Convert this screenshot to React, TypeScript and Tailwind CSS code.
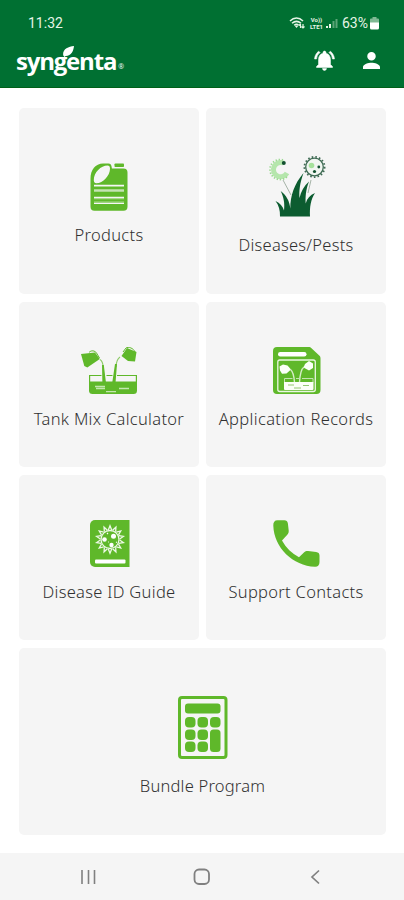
import React from 'react';
import clsx from 'clsx';

const GREEN = '#5fb82a';
const PALE = '#f5f5f5';

const spokes = (count: number) => Array.from({ length: count }, (_, i) => (i * 360) / count);

const JugIcon = () => (
  <svg width="38" height="48" viewBox="0 0 38 48">
    <path
      fill={GREEN}
      fillRule="evenodd"
      d="M13 .5h5.5c1.8 0 2.8 1.2 3 2.8l.4 2.3h11.6a4 4 0 0 1 4 4v34.2a4 4 0 0 1-4 4h-29a4 4 0 0 1-4-4V15.500C.5 7 5.500 .5 13 .5Zm4.500 2C11 2.500 3.800 9.500 3.800 17c0 2.200 1 3.200 2.600 3.200 6.600 0 13.600-7.700 13.600-14.500 0-2.100-.8-3.200-2.500-3.200Z"
    />
    <rect x="24.500" y=".5" width="9.500" height="3.500" rx=".8" fill={GREEN} />
    <path stroke={PALE} strokeWidth="1.300" d="M4 22.300h30M4 27.800h30M4 34.500h30M4 40.300h30" />
    <path stroke="#a9d98d" strokeWidth="1.200" d="M4 23.500h30M4 35.700h30M4 26.600h30M4 39.100h30" />
  </svg>
);

const DiseasesIcon = () => (
  <svg className="ml-0.5" width="60" height="61" viewBox="0 0 60 61">
    <path d="m16 24 8 15M44 24l-3 13" stroke="#a5b3a7" strokeWidth="1" fill="none" />
    <path d="M16.500 7A7.200 7.200 0 1 0 20 17" stroke="#b5e6ac" strokeWidth="5" fill="none" />
    <path
      d="M16 4A10 10 0 1 0 21 19.500"
      stroke="#9bd991"
      strokeWidth="1.800"
      strokeDasharray="1.300 1.800"
      fill="none"
    />
    <circle cx="16.800" cy="7" r="2" fill="#12502f" />
    <circle cx="47.500" cy="11" r="8.800" fill="#f1f6f1" stroke="#3f6b54" strokeWidth="1.300" />
    <circle
      cx="47.500"
      cy="11"
      r="10.100"
      fill="none"
      stroke="#3f6b54"
      strokeWidth="1.800"
      strokeDasharray="1.600 2.100"
    />
    <circle cx="44.500" cy="9.500" r="2.800" fill="#a5e29b" />
    <circle cx="51.800" cy="11" r="1.400" fill="#12502f" />
    <circle cx="47.500" cy="15.500" r="1.600" fill="#12502f" />
    <path
      fill="#0c5c30"
      d="M13 60.500c.2-6-1.300-11.500-4.500-15.500 4.500 2 7.300 5.200 8.500 9.500 1-7.500-.5-13.500-3.300-19.500 5.800 4.500 8.800 10 9.600 17.500 0-13 4-24.500 13.200-35.500-3.700 10-4.500 18-4 25 1.500-6.500 4.500-12 9.500-16.500-3.300 8.500-3.700 15.500-3.300 22 1.300-5 4.300-8.300 9.300-10.500-4.200 6.500-5.500 14-5 23.500Z"
    />
  </svg>
);

// Two measuring cups pouring into an open tank
const TankIcon = () => (
  <svg width="57" height="47" viewBox="0 0 57 47">
    <g fill="none" stroke={GREEN}>
      <path d="M8 5.500c2-2.500 6-2 7.500.5l3 5M42 5l3-4c2.500-1.500 7.500 0 9 4" strokeWidth="1" />
      <path d="M19 12.500c2.500 1.500 3 4 3.300 8M39 10c-3 2-3.800 5-4 10" strokeWidth="1.100" opacity=".7" />
      <path d="M20.500 28.500H8.600v8M25.500 28.500h6M36 28.500h19.400v8" strokeWidth="1.200" />
    </g>
    <g fill={GREEN}>
      <path d="m0 7 14-1.500 4.800 6.500-12.500 8.500-3-1.500Z" />
      <path d="m46 1 9.500 4-1.500 9.500-7-.5-6.500-5Z" />
      <path d="M21 18h1.800l2.200 18h-3.600ZM34 17h2l-1.500 19H31.200Z" />
      <path d="M8 34.500h48v9a3.500 3.500 0 0 1-3.500 3.500h-41A3.500 3.500 0 0 1 8 43.500Z" />
    </g>
    <path stroke="#c4e6b0" strokeWidth="1.300" d="M14 39.500h10M15 41.500h9M38 41.500h10M25 44.700h10" />
  </svg>
);

const RecordsIcon = () => (
  <svg className="ml-px" width="48" height="47" viewBox="0 0 48 47">
    <path
      fill={GREEN}
      d="M4 0h31.500c1.500 0 2.200.5 3 1.300l8 7.500c.8.800 1 1.600 1 2.700V43a4 4 0 0 1-4 4H4a4 4 0 0 1-4-4V4a4 4 0 0 1 4-4Z"
    />
    <rect x="5" y="5" width="28.500" height="4.500" rx="2.200" fill="#fff" />
    <rect x="4.800" y="13" width="37.500" height="31.500" rx="2" fill="none" stroke="#e9f7e1" strokeWidth="1.300" />
    <path fill="#fbfff8" d="m6.500 19.500 3.500-2 4.500 1 3.500 4-4.500 4-4.500.3-2-3.300ZM32 17l4-3 4 2.500v4.500l-4 2.500-5.500-3Z" />
    <path d="M17.500 22.500c2.500 2 3.500 6 4 13M31 20c-3 2-4 7-4.500 15.500" stroke="#d6edc8" strokeWidth="1.400" fill="none" />
    <path d="M19.500 31.500h-8v4M23 31.500h3M29 31.500h11v4" stroke="#c3e3b0" strokeWidth="1" fill="none" />
    <path fill="#fbfff8" d="M11 35h29.500v7a1 1 0 0 1-1 1H12a1 1 0 0 1-1-1Z" />
    <path stroke="#93c873" strokeWidth="1" d="M15 38h6M30 38.500h6M21 41h7" />
  </svg>
);

const GuideIcon = () => (
  <svg className="ml-0.5" width="40" height="47" viewBox="0 0 40 47">
    <path fill={GREEN} d="M5 0h34.500v47H5a5 5 0 0 1-5-5V5a5 5 0 0 1 5-5Z" />
    <rect x="5" y="39.500" width="30.500" height="4" rx="1" fill="#fff" />
    {spokes(14).map((angle) => (
      <path
        key={angle}
        d="m18.300 10 1.700-4.200 1.700 4.200"
        stroke="#edf8e6"
        strokeWidth="1.300"
        fill="none"
        transform={`rotate(${angle} 20 19.500)`}
      />
    ))}
    <circle cx="20" cy="19.500" r="9" fill="none" stroke="#edf8e6" strokeWidth="1.300" />
    <circle cx="14.500" cy="19.500" r="2.300" fill="#fff" />
    <circle cx="23.500" cy="16.300" r="2.500" fill="#fff" />
    <circle cx="21.500" cy="25" r="2.200" fill="#fff" />
    <path d="m17 14 1-1M26 22l1 .5M18 22h.8" stroke="#fff" strokeWidth="1.200" />
  </svg>
);

const PhoneIcon = () => (
  <svg width="47" height="47" viewBox="0 0 47 47">
    <path
      fill={GREEN}
      d="M4.500.3h6.800c2.100 0 3.200 1 3.600 3.100l.8 7.100c.1 1.600-.2 2.800-1.200 4L9 20.500c4 7.300 9.800 13 17 16.800l5.200-5c1.100-1 2.200-1.300 3.900-1.200l8 .9c2.300.3 3.400 1.500 3.400 3.600v6.400c0 3.200-1.600 4.900-4.500 4.800C20 45.800 1 28 .3 5.500.2 2.300 1.600.3 4.500.3Z"
    />
  </svg>
);

const CalculatorIcon = () => (
  <svg width="50" height="63" viewBox="0 0 50 63">
    <rect x="1.500" y="1.500" width="46.500" height="60" rx="2.500" fill="none" stroke={GREEN} strokeWidth="3" />
    <g fill={GREEN}>
      <rect x="7" y="7.500" width="35.500" height="10" rx="3" />
      <rect x="7" y="21" width="10.500" height="10.500" rx="4" />
      <rect x="19.500" y="21" width="10.500" height="10.500" rx="4" />
      <rect x="32" y="21" width="10.500" height="10.500" rx="4" />
      <rect x="7" y="33.500" width="10.500" height="10.500" rx="4" />
      <rect x="19.500" y="33.500" width="10.500" height="10.500" rx="4" />
      <rect x="7" y="45.500" width="10.500" height="10.500" rx="4" />
      <rect x="19.500" y="45.500" width="10.500" height="10.500" rx="4" />
      <rect x="32" y="33.500" width="10.500" height="22.500" rx="3.500" />
    </g>
  </svg>
);

interface MenuCardProps {
  icon: React.ReactNode;
  label: string;
  className?: string;
  labelClassName?: string;
}

const MenuCard: React.FC<MenuCardProps> = ({ icon, label, className, labelClassName }) => (
  <button className={clsx('flex flex-col items-center rounded-[5px] bg-[#f5f5f5]', className)}>
    {icon}
    <span className={clsx('whitespace-nowrap text-[16.5px] leading-6 font-light text-[#303030]', labelClassName)}>
      {label}
    </span>
  </button>
);

const StatusBar = () => (
  <div className="flex h-[46px] items-center justify-between pl-7 pr-[25px] text-[#e6f5e6]">
    <span className="font-['Roboto',sans-serif] text-[14px] leading-4 font-normal">11:32</span>
    <div className="flex items-center">
      <svg width="16" height="14" viewBox="0 0 16 14" fill="none">
        <path d="M1 5c4-4 9-4 13 0M3 7.300c3-2.600 6-2.600 9 0M5.200 9.300c1.500-1.300 3-1.300 4.500 0" stroke="currentColor" strokeWidth="1.500" />
        <path d="m5.500 9.500 2 2.500 2-2.500Z" fill="currentColor" />
        <path d="M11.500 12V8m-1.500 1.500L11.500 8M14 8v4m-1.500-1.500L14 12l1.500-1.500" stroke="currentColor" strokeWidth="1.200" />
      </svg>
      <span className="ml-1 flex w-[15px] flex-col items-center font-['Roboto',sans-serif] text-[6px] leading-[7px] font-bold">
        <span>Vo))</span>
        <span>LTE1</span>
      </span>
      <svg className="ml-0.5" width="13" height="14" viewBox="0 0 13 14">
        <path d="M0 10h2v2H0ZM3 8h2v4H3Z" fill="currentColor" />
        <path d="M6.500 5h2v7h-2ZM9.500 3h2v9h-2Z" fill="#5ba477" />
      </svg>
      <span className="ml-[3px] font-['Roboto',sans-serif] text-[14px] leading-4 font-normal">63%</span>
      <svg className="ml-0.5" width="9" height="13" viewBox="0 0 9 13">
        <path d="M2.500 0h4v1.500H8q1 0 1 1V6H0V2.500q0-1 1-1h1.500Z" fill="#80b994" />
        <path d="M0 5.500h9V11q0 1.500-1.500 1.500h-6Q0 12.500 0 11Z" fill="#fff" />
      </svg>
    </div>
  </div>
);

const AppBar = () => (
  <div className="flex h-[42px] items-start justify-between pl-4 pr-[24px] text-white">
    <div className="relative flex items-start font-['Open_Sans',sans-serif]">
      <span className="text-[24px] leading-[30px] font-bold tracking-[-1.2px]">syngenta</span>
      <span className="mt-[15px] ml-[2px] text-[7px] leading-3">®</span>
      <svg className="absolute top-0 left-[47px]" width="11" height="12" viewBox="0 0 11 12">
        <path d="M11 0C5 .5-1 3.500.3 9.500L1.500 11l1.200-1C8.500 9.500 10.500 5 11 0Z" fill="#fff" />
      </svg>
    </div>
    <div className="flex items-start gap-7">
      <svg className="mt-1" width="21" height="21" viewBox="1.500 1.500 21 21" fill="currentColor">
        <path d="M7.580 4.080 6.150 2.650C3.750 4.480 2.170 7.300 2.030 10.500h2a8.445 8.445 0 0 1 3.550-6.420zm12.390 6.420h2c-.15-3.200-1.730-6.020-4.120-7.850l-1.420 1.430a8.495 8.495 0 0 1 3.540 6.420zM18 11c0-3.070-1.640-5.640-4.500-6.320V4c0-.83-.67-1.500-1.500-1.500s-1.500.67-1.500 1.500v.68C7.630 5.360 6 7.920 6 11v5l-2 2v1h16v-1l-2-2v-5zm-6 11c.14 0 .27-.01.400-.04.650-.14 1.180-.58 1.440-1.180.1-.240.150-.500.150-.780h-4c.010 1.100.900 2 2.010 2z" stroke="currentColor" strokeWidth=".5" />
      </svg>
      <svg className="mt-1.5" width="17" height="17" viewBox="4 4 16 16" fill="currentColor">
        <path d="M12 12c2.210 0 4-1.790 4-4s-1.790-4-4-4-4 1.790-4 4 1.790 4 4 4zm0 2c-2.670 0-8 1.340-8 4v2h16v-2c0-2.660-5.330-4-8-4z" />
      </svg>
    </div>
  </div>
);

const NavigationBar = () => (
  <nav className="flex h-[47px] items-center justify-between bg-[#f5f5f5] pr-[81px] pl-[80px] text-[#808080]">
    <svg width="16" height="16" viewBox="0 0 16 16" stroke="currentColor" strokeWidth="1.600">
      <path d="M2 1v14M8.500 1v14M14.500 1v14" />
    </svg>
    <svg width="18" height="18" viewBox="0 0 18 18" fill="none" stroke="currentColor" strokeWidth="1.800">
      <rect x="1.500" y="1.500" width="14.500" height="14.500" rx="4.500" />
    </svg>
    <svg width="16" height="16" viewBox="0 0 16 16" fill="none" stroke="currentColor" strokeWidth="1.700">
      <path d="M12 1.500 5 8l7 6.500" />
    </svg>
  </nav>
);

const App: React.FC = () => {
  return (
    <div className="flex h-[900px] w-[404px] flex-col overflow-hidden bg-white font-['Noto_Sans',sans-serif]">
      <header className="h-[88px] shrink-0 border-b border-[#006018] bg-[#007032]">
        <StatusBar />
        <AppBar />
      </header>
      <main className="grid flex-1 grid-cols-2 grid-rows-[186px_165px_165px_187px] content-start gap-x-[7px] gap-y-2 pt-5 pr-[18px] pl-[19px]">
        <MenuCard icon={<JugIcon />} label="Products" className="gap-3 pt-[55px]" labelClassName="tracking-[0.3px]" />
        <MenuCard icon={<DiseasesIcon />} label="Diseases/Pests" className="gap-4 pt-12" labelClassName="tracking-[0.25px]" />
        <MenuCard icon={<TankIcon />} label="Tank Mix Calculator" className="gap-[13px] pt-[45px]" labelClassName="tracking-[0.3px]" />
        <MenuCard icon={<RecordsIcon />} label="Application Records" className="gap-[13px] pt-[45px]" labelClassName="tracking-[0.35px]" />
        <MenuCard icon={<GuideIcon />} label="Disease ID Guide" className="gap-[13px] pt-[45px]" labelClassName="tracking-[0.3px]" />
        <MenuCard icon={<PhoneIcon />} label="Support Contacts" className="gap-[13px] pt-[45px]" labelClassName="tracking-[0.3px]" />
        <MenuCard icon={<CalculatorIcon />} label="Bundle Program" className="col-span-2 gap-[15px] pt-12" labelClassName="tracking-[0.2px]" />
      </main>
      <NavigationBar />
    </div>
  );
};

export default App;
